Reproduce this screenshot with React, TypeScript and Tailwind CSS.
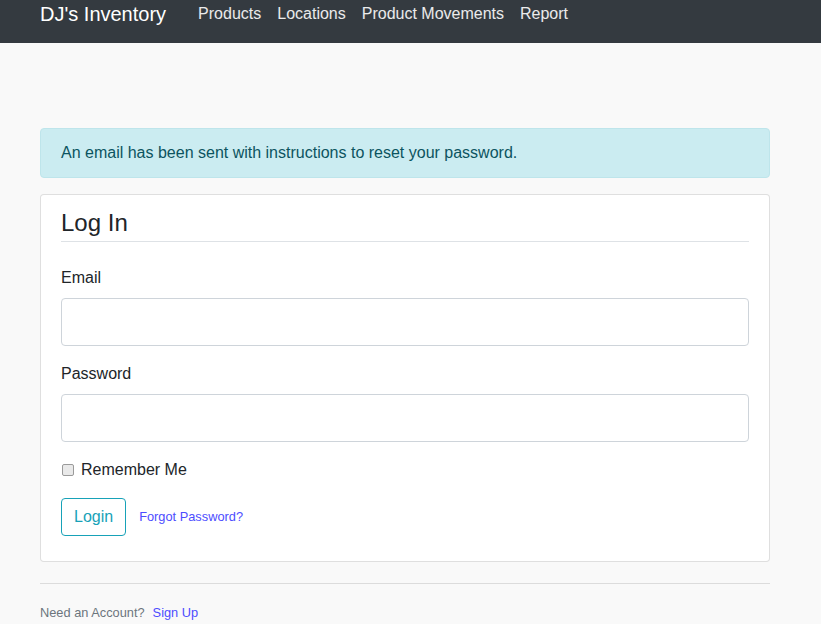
const navLinks = ["Products", "Locations", "Product Movements", "Report"];

export default function App() {
  return (
    <div className="min-h-[624px] bg-[#f9f9f9] font-['Liberation_Sans',Arial,sans-serif] text-[#212529]">
      <nav className="h-[43px] bg-[#343a40]">
        <div className="ml-[40px] flex w-[730px] items-start">
          <span className="-mt-[1px] text-[20px] leading-[30px] text-white">DJ's Inventory</span>
          <div className="ml-[32px] flex gap-4 pt-[2px]">
            {navLinks.map((link) => (
              <a key={link} href="#" className="text-base leading-6 text-white/90">
                {link}
              </a>
            ))}
          </div>
        </div>
      </nav>

      <main className="ml-[40px] w-[730px] pt-[85px]">
        <div className="rounded border border-[#bee5eb] bg-[#cbecf1] px-5 py-3 text-base leading-6 text-[#0c5460]">
          An email has been sent with instructions to reset your password.
        </div>

        <div className="mt-4 rounded border border-black/[0.125] bg-white px-5 pt-[13px] pb-[25px]">
          <h2 className="border-b border-[#dee2e6] pb-[4px] text-[24px] leading-[29px]">Log In</h2>

          <div className="mt-6">
            <label className="mb-2 block text-base leading-6">Email</label>
            <input type="email" className="block h-[48px] w-full rounded border border-[#ced4da] bg-white px-3" />
          </div>

          <div className="mt-4">
            <label className="mb-2 block text-base leading-6">Password</label>
            <input type="password" className="block h-[48px] w-full rounded border border-[#ced4da] bg-white px-3" />
          </div>

          <div className="mt-4 flex h-6 items-center">
            <span className="ml-[1px] h-[12px] w-[12px] rounded-[2px] border border-[#9a9a9a] bg-[#e9e9e9]" />
            <span className="ml-[7px] text-base leading-6">Remember Me</span>
          </div>

          <div className="mt-4 flex items-center">
            <button className="h-[38px] rounded border border-[#17a2b8] px-3 text-base text-[#17a2b8]">Login</button>
            <a href="#" className="ml-[13px] text-[12.8px] text-[#4d4dff]">
              Forgot Password?
            </a>
          </div>
        </div>

        <div className="mt-[21px] border-t border-[#dcdcdc] pt-[19px] text-[12.8px] leading-[19px]">
          <span className="text-[#6c757d]">Need an Account?</span>
          <a href="#" className="ml-2 text-[#4d4dff]">
            Sign Up
          </a>
        </div>
      </main>
    </div>
  );
}
